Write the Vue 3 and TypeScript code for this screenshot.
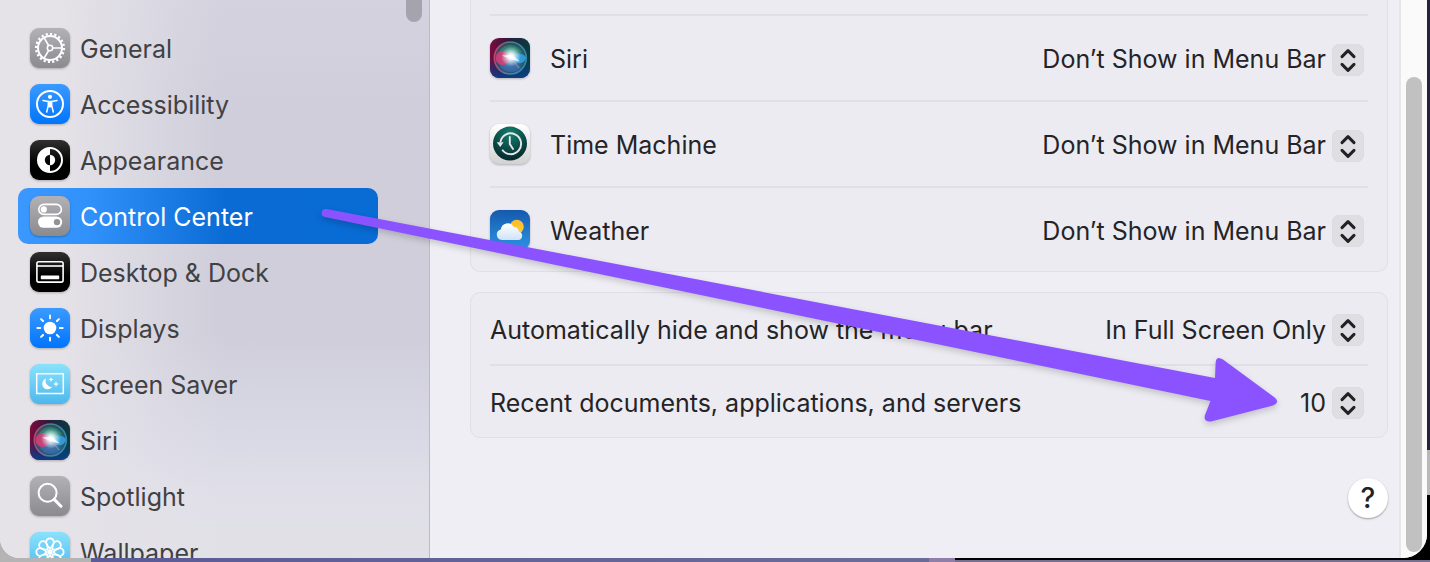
<script setup lang="ts">
import { ref } from 'vue'

interface NavItem {
  id: string
  label: string
}

interface Setting {
  id: string
  label: string
  icon?: string
  value: string
  options: string[]
}

const navItems: NavItem[] = [
  { id: 'general', label: 'General' },
  { id: 'accessibility', label: 'Accessibility' },
  { id: 'appearance', label: 'Appearance' },
  { id: 'control-center', label: 'Control Center' },
  { id: 'desktop-dock', label: 'Desktop & Dock' },
  { id: 'displays', label: 'Displays' },
  { id: 'screen-saver', label: 'Screen Saver' },
  { id: 'siri', label: 'Siri' },
  { id: 'spotlight', label: 'Spotlight' },
  { id: 'wallpaper', label: 'Wallpaper' },
]
const selected = ref('control-center')

const barOptions = ['Show in Menu Bar', 'Don’t Show in Menu Bar']
const groups = ref<{ id: string; items: Setting[] }[]>([
  {
    id: 'modules',
    items: [
      { id: 'siri', label: 'Siri', icon: 'siri', value: barOptions[1], options: barOptions },
      { id: 'time-machine', label: 'Time Machine', icon: 'time-machine', value: barOptions[1], options: barOptions },
      { id: 'weather', label: 'Weather', icon: 'weather', value: barOptions[1], options: barOptions },
    ],
  },
  {
    id: 'general',
    items: [
      {
        id: 'autohide',
        label: 'Automatically hide and show the menu bar',
        value: 'In Full Screen Only',
        options: ['Always', 'On Desktop Only', 'In Full Screen Only', 'Never'],
      },
      {
        id: 'recents',
        label: 'Recent documents, applications, and servers',
        value: '10',
        options: ['None', '5', '10', '15', '20', '30', '50'],
      },
    ],
  },
])

const rayAngles = [0, 45, 90, 135, 180, 225, 270, 315]
</script>

<template>
  <div class="desktop">
    <svg class="sprite" width="0" height="0" aria-hidden="true">
      <defs>
        <linearGradient id="g-gray" x2="0" y2="1"><stop stop-color="#b2b1b5" /><stop offset="1" stop-color="#8b8a8f" /></linearGradient>
        <linearGradient id="g-blue" x2="0" y2="1"><stop stop-color="#3b9aff" /><stop offset="1" stop-color="#0075fd" /></linearGradient>
        <linearGradient id="g-black" x2="0" y2="1"><stop stop-color="#303030" /><stop offset=".6" stop-color="#000" /></linearGradient>
        <linearGradient id="g-cyan" x2="0" y2="1"><stop stop-color="#8ae2fc" /><stop offset="1" stop-color="#4db8ee" /></linearGradient>
        <linearGradient id="g-white" x2="0" y2="1"><stop stop-color="#fff" /><stop offset="1" stop-color="#d2d2d2" /></linearGradient>
        <linearGradient id="g-sky" x2="0" y2="1"><stop stop-color="#1659ad" /><stop offset="1" stop-color="#2b96e6" /></linearGradient>
        <linearGradient id="g-sun" x2="0" y2="1"><stop stop-color="#fdb92e" /><stop offset="1" stop-color="#fdd230" /></linearGradient>
        <linearGradient id="g-cloud" x2="0" y2="1"><stop stop-color="#fff" /><stop offset="1" stop-color="#cfe3f8" /></linearGradient>
        <radialGradient id="g-teal" cx=".5" cy=".2" r=".8"><stop stop-color="#12806f" /><stop offset="1" stop-color="#06262b" /></radialGradient>
        <linearGradient id="g-siri" x2="1" y2=".2"><stop stop-color="#85093f" /><stop offset=".45" stop-color="#2c1a3c" /><stop offset="1" stop-color="#073d43" /></linearGradient>
        <linearGradient id="g-siri-low" x2="0" y2="1"><stop offset=".5" stop-color="#0b3d8c" stop-opacity="0" /><stop offset="1" stop-color="#0b3f96" stop-opacity=".85" /></linearGradient>
        <linearGradient id="g-orb" x2="1" y2="0"><stop stop-color="#d9527c" /><stop offset=".5" stop-color="#45a596" /><stop offset="1" stop-color="#3a9fcb" /></linearGradient>
        <radialGradient id="g-orb-fill"><stop stop-color="#a5cfd8" /><stop offset=".6" stop-color="#4a8a8c" stop-opacity=".7" /><stop offset="1" stop-color="#397987" stop-opacity=".4" /></radialGradient>
        <radialGradient id="g-glow"><stop stop-color="#fff" /><stop offset=".3" stop-color="#fff" stop-opacity=".85" /><stop offset="1" stop-color="#cff" stop-opacity="0" /></radialGradient>
      </defs>

      <symbol id="i-general" viewBox="0 0 40 40">
        <rect width="40" height="40" rx="9" fill="url(#g-gray)" />
        <g fill="none" stroke="#fff">
          <circle cx="20" cy="20" r="14" stroke-width="2.2" pathLength="40" stroke-dasharray="1 1" />
          <circle cx="20" cy="20" r="12" stroke-width="2" />
          <circle cx="20" cy="20" r="2.7" stroke-width="1.5" />
          <path d="M22.8 20H32M18.6 17.5 14 9.6M18.6 22.5 14 30.4" stroke-width="1.6" />
        </g>
      </symbol>
      <symbol id="i-accessibility" viewBox="0 0 40 40">
        <rect width="40" height="40" rx="9" fill="url(#g-blue)" />
        <circle cx="20" cy="20" r="13" fill="none" stroke="#fff" stroke-width="2" />
        <circle cx="20" cy="12.8" r="2.1" fill="#fff" />
        <path d="M13 16.5 18.3 17.4V21.5L16.7 28M27 16.5 21.7 17.4V21.5L23.3 28" fill="none" stroke="#fff" stroke-width="1.5" stroke-linecap="round" stroke-linejoin="round" />
        <path d="M18 16.8h4v5.7l-1.1 1h-1.8L18 22.5z" fill="#fff" />
      </symbol>
      <symbol id="i-appearance" viewBox="0 0 40 40">
        <rect width="40" height="40" rx="9" fill="url(#g-black)" />
        <circle cx="20" cy="20" r="12" fill="none" stroke="#fff" stroke-width="2" />
        <path d="M20 8a12 12 0 0 0 0 24v-6.8a5.2 5.2 0 0 1 0-10.4zM20 14.8a5.2 5.2 0 0 1 0 10.4z" fill="#fff" />
      </symbol>
      <symbol id="i-control-center" viewBox="0 0 40 40">
        <rect width="40" height="40" rx="9" fill="url(#g-gray)" />
        <rect x="8.8" y="8.4" width="22.6" height="10" rx="5" fill="none" stroke="#fff" stroke-width="1.6" />
        <circle cx="13.8" cy="13.4" r="3.1" fill="#fff" />
        <rect x="8" y="20.4" width="24.2" height="11.4" rx="5.7" fill="#fff" />
        <circle cx="27" cy="26.1" r="3.2" fill="#939297" />
      </symbol>
      <symbol id="i-desktop-dock" viewBox="0 0 40 40">
        <rect width="40" height="40" rx="9" fill="url(#g-black)" />
        <rect x="6.9" y="9.7" width="26.2" height="20.4" rx="1.8" fill="none" stroke="#fff" stroke-width="1.6" />
        <path d="M7 14h26" stroke="#fff" stroke-width="1.6" />
        <rect x="10.8" y="23.4" width="18.4" height="3.8" rx=".6" fill="#fff" />
      </symbol>
      <symbol id="i-displays" viewBox="0 0 40 40">
        <rect width="40" height="40" rx="9" fill="url(#g-blue)" />
        <circle cx="20" cy="20" r="6.3" fill="#fff" />
        <path v-for="a in rayAngles" :key="a" d="M20 10.2V7.4" :transform="`rotate(${a} 20 20)`" stroke="#fff" stroke-width="2" stroke-linecap="round" />
      </symbol>
      <symbol id="i-screen-saver" viewBox="0 0 40 40">
        <rect width="40" height="40" rx="9" fill="url(#g-cyan)" />
        <rect x="6.7" y="9.7" width="26.6" height="19.8" fill="none" stroke="#fff" stroke-width="1.5" />
        <path d="M16.2 14.4a5.6 5.6 0 1 0 6.3 8.4 5.9 5.9 0 0 1-6.3-8.4z" fill="#fff" />
        <path d="M21 13l.7 1.8 1.8.7-1.8.7L21 18l-.7-1.8-1.8-.7 1.8-.7zM26 17l.8 2.2 2.2.8-2.2.8L26 23l-.8-2.2L23 20l2.2-.8z" fill="#fff" />
      </symbol>
      <symbol id="i-siri" viewBox="0 0 40 40">
        <rect width="40" height="40" rx="9" fill="url(#g-siri)" />
        <rect width="40" height="40" rx="9" fill="url(#g-siri-low)" />
        <circle cx="20.3" cy="20" r="16" fill="url(#g-orb-fill)" stroke="url(#g-orb)" stroke-width="1.6" stroke-opacity=".75" />
        <path d="M9 14c5-9 17-9 23 0-3 3-8 4-12 7-3-4-6-6-11-7z" fill="#2e9a78" opacity=".55" />
        <path d="M10 28c3-4 7-8 11-9 4 3 8 6 10 11-6 6-17 5-21-2z" fill="#3f6fc4" opacity=".55" />
        <circle cx="12.6" cy="20" r="7" fill="#e63a78" opacity=".8" />
        <path d="M20 20c5-6 14-6 16 0-2 7-11 7-16 0z" fill="#36a6ee" opacity=".8" />
        <circle cx="21" cy="18.5" r="10" fill="url(#g-glow)" />
        <path d="M12 17.5 22 17l8 6.5-8-2z" fill="#fff" opacity=".8" />
        <path d="M23 22.5 29 30" stroke="#e2a0ba" stroke-width=".8" opacity=".8" />
      </symbol>
      <symbol id="i-spotlight" viewBox="0 0 40 40">
        <rect width="40" height="40" rx="9" fill="url(#g-gray)" />
        <circle cx="17.6" cy="16.8" r="9" fill="none" stroke="#fff" stroke-width="2" />
        <path d="M24.2 23.4 31 30.2" stroke="#fff" stroke-width="3" stroke-linecap="round" />
      </symbol>
      <symbol id="i-wallpaper" viewBox="0 0 40 40">
        <rect width="40" height="40" rx="9" fill="url(#g-cyan)" />
        <g v-for="a in rayAngles" :key="a" :transform="`rotate(${a} 20 20)`" fill="none" stroke="#fff">
          <path d="M20 16.6C16.8 13.4 15.8 11 16.3 9a3.9 3.9 0 0 1 7.4 0c.5 2-.5 4.4-3.7 7.6z" stroke-width="1.7" />
          <path d="M20 19v-3.5" stroke-width="1.2" />
        </g>
        <circle cx="20" cy="20" r="2.2" fill="#fff" />
      </symbol>
      <symbol id="i-time-machine" viewBox="0 0 40 40">
        <rect width="40" height="40" rx="9" fill="url(#g-white)" />
        <circle cx="20" cy="19.6" r="17" fill="url(#g-teal)" />
        <path d="M10.4 18.2a10.4 10.4 0 1 1 1.8 7.6" fill="none" stroke="#e7e9e8" stroke-width="1.9" />
        <path d="M6.8 18.2h6.8L10.2 23z" fill="#e7e9e8" />
        <path d="M19.8 13v7l3.2 5" fill="none" stroke="#e7e9e8" stroke-width="1.9" stroke-linecap="round" stroke-linejoin="round" />
      </symbol>
      <symbol id="i-weather" viewBox="0 0 40 40">
        <rect width="40" height="40" rx="9" fill="url(#g-sky)" />
        <circle cx="26.8" cy="16.8" r="7" fill="url(#g-sun)" />
        <path d="M11.8 30a5.4 5.4 0 0 1-1-10.6 6.8 6.8 0 0 1 12.8-2.3 5.3 5.3 0 0 1 5.3 4.3A4.4 4.4 0 0 1 28.4 30z" fill="url(#g-cloud)" />
      </symbol>
    </svg>

    <div class="window">
      <aside class="sidebar">
        <nav class="nav" aria-label="Settings">
          <a
            v-for="item in navItems"
            :key="item.id"
            class="nav-item"
            :class="{ selected: item.id === selected }"
            :href="'#' + item.id"
            :aria-current="item.id === selected ? 'page' : undefined"
            @click.prevent="selected = item.id"
          >
            <svg class="icon" aria-hidden="true"><use :href="'#i-' + item.id" /></svg>
            <span class="nav-label">{{ item.label }}</span>
          </a>
        </nav>
        <div class="side-thumb"></div>
      </aside>

      <main class="pane">
        <section v-for="group in groups" :key="group.id" class="group" :class="group.id">
          <div v-for="item in group.items" :key="item.id" class="row">
            <svg v-if="item.icon" class="icon" aria-hidden="true"><use :href="'#i-' + item.icon" /></svg>
            <label class="label" :for="'set-' + item.id">{{ item.label }}</label>
            <div class="popup">
              <select :id="'set-' + item.id" v-model="item.value">
                <option v-for="o in item.options" :key="o" :value="o">{{ o }}</option>
              </select>
              <svg class="stepper" viewBox="0 0 32 32" aria-hidden="true">
                <path d="M10 12.6 16 6.6l6 6M10 20.4l6 6 6-6" />
              </svg>
            </div>
          </div>
        </section>
        <button class="help" type="button" aria-label="Help">?</button>
      </main>

      <div class="track"><div class="thumb"></div></div>
    </div>

    <svg class="arrow" width="1430" height="562" viewBox="0 0 1430 562" aria-hidden="true">
      <path d="M326.5 209 1215 378 1215.6 363Q1216 355 1223 359.5L1274 397Q1281 402 1273 405.5L1211 421.5Q1203 422 1205 415L1210.5 401 325 217A4 4 0 0 1 326.5 209Z" />
    </svg>
  </div>
</template>

<style>
body {
  margin: 0;
}
</style>

<style scoped>
.desktop {
  position: relative;
  box-sizing: border-box;
  height: 100vh;
  padding: 0 3px 4px 0;
  overflow: hidden;
  font-family: Inter, "Liberation Sans", sans-serif;
  font-size: 25px;
  line-height: 32px;
  background:
    linear-gradient(#000, #000 50%, #77708f 50%) right bottom / 475px 4px no-repeat,
    linear-gradient(#26223d 80%, #b8b8b8 80%, #b8b8b8 88%, #000 88%) right top / 40px 100% no-repeat,
    linear-gradient(90deg, #b4b4b4 91px, #5a5b97 91px, #6a6c98 65%, #8f7ea8 65%);
}

.sprite {
  position: absolute;
}

.window {
  display: flex;
  height: 100%;
  overflow: hidden;
  border-radius: 0 0 24px 20px;
  background: #efeef4;
}

.sidebar {
  display: flex;
  flex: none;
  justify-content: space-between;
  align-items: flex-start;
  box-sizing: border-box;
  width: 430px;
  padding: 0 7px 0 18px;
  border-right: 1px solid #bcbbc4;
  background:
    linear-gradient(90deg, #e5e2e8 60px, rgb(229 226 232 / 0) 220px),
    linear-gradient(#d3d2de, #cfceda 20%, #cfceda 60%, #dadae6 80%, #e0dfe8 88%, #e0e1e6);
}

.nav {
  width: 360px;
  padding-top: 20px;
}

.nav-item {
  display: flex;
  align-items: center;
  gap: 10px;
  height: 56px;
  padding-left: 12px;
  border-radius: 10px;
  color: #414144;
  text-decoration: none;
}

.nav-item.selected {
  color: #fff;
  background: linear-gradient(90deg, #3b98ff, #3091fb 20%, #0b6bd4 58%, #096bd4);
}

.nav-label {
  padding-top: 2px;
}

.icon {
  flex: none;
  width: 40px;
  height: 40px;
  filter: drop-shadow(0 1px 1px rgb(0 0 0 / 0.25));
}

.side-thumb {
  width: 16px;
  height: 22px;
  border-radius: 0 0 8px 8px;
  background: #a5a4ae;
}

.pane {
  flex: 1;
  min-width: 0;
  padding: 0 11px 0 40px;
}

.group {
  padding: 0 19px;
  border: 1px solid #e0dfe5;
  border-radius: 10px;
  background: #ecebf1;
  color: #242427;
}

.group.modules {
  margin-bottom: 20px;
  padding-top: 14px;
  border-top: 0;
  border-radius: 0 0 10px 10px;
}

.row {
  display: flex;
  align-items: center;
  height: 71px;
}

.modules .row {
  gap: 20px;
  height: 84px;
  border-top: 2px solid #e0dfe5;
}

.modules .row:last-child {
  height: 83px;
}

.row + .row {
  border-top: 2px solid #e0dfe5;
}

.label {
  flex: 1;
  padding-top: 2px;
}

.popup {
  display: grid;
  align-items: center;
  justify-items: end;
  padding-right: 4px;
}

.popup select,
.stepper {
  grid-area: 1 / 1;
}

.popup select {
  appearance: none;
  margin: 0;
  padding: 2px 38px 0 0;
  border: 0;
  background: transparent;
  color: inherit;
  font: inherit;
  text-align-last: right;
}

.stepper {
  width: 32px;
  height: 32px;
  margin-top: 3px;
  border-radius: 8px;
  background: #dfdee3;
  box-shadow: inset 0 0 1px #c9c8ce;
  pointer-events: none;
}

.stepper path {
  fill: none;
  stroke: #222225;
  stroke-width: 3;
  stroke-linecap: round;
  stroke-linejoin: round;
}

.help {
  display: block;
  width: 40px;
  height: 40px;
  margin: 40px 0 0 auto;
  padding: 0;
  border: 0;
  border-radius: 50%;
  background: #fff;
  box-shadow: 0 1px 2px rgb(0 0 0 / 0.35);
  color: #222225;
  font: 500 28px/40px Inter, sans-serif;
}

.track {
  display: flex;
  flex: none;
  box-sizing: border-box;
  width: 28px;
  padding: 77px 5px 6px;
  border-left: 2px solid #e6e6e9;
  background: #fafafa;
}

.thumb {
  flex: 1;
  border-radius: 8px;
  background: #c1c1c1;
}

.arrow {
  position: absolute;
  top: 0;
  left: 0;
  pointer-events: none;
  filter: drop-shadow(0 3px 3px rgb(0 0 0 / 0.18));
}

.arrow path {
  fill: #8b53ff;
}
</style>
